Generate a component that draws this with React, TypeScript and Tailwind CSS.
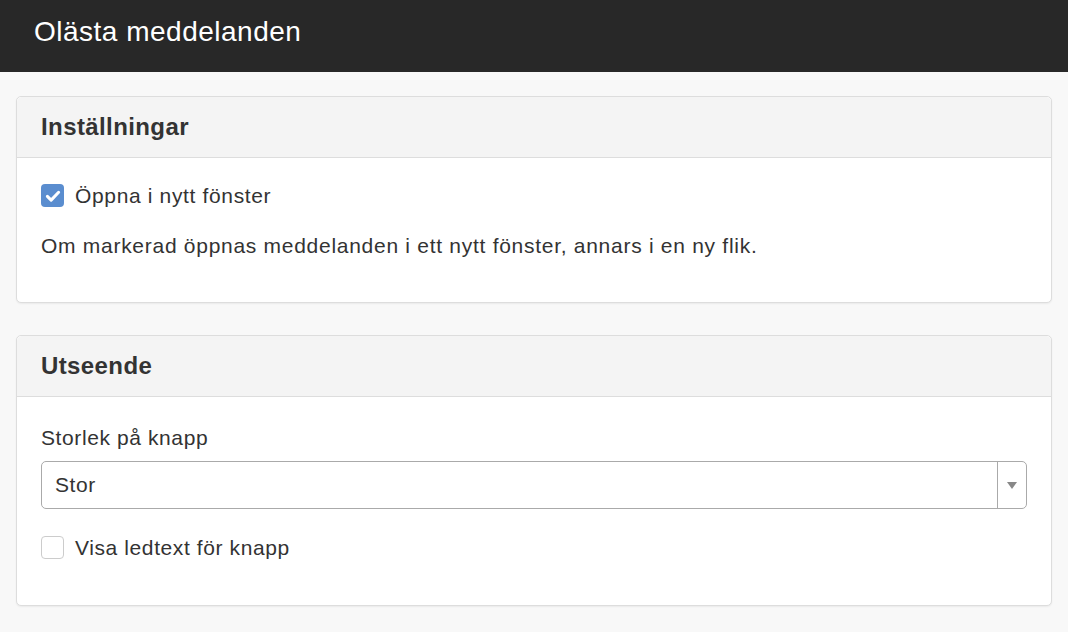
function Card({ title, children, bodyClass }: { title: string; children: React.ReactNode; bodyClass: string }) {
  return (
    <div className="bg-white border border-[#dddddd] rounded-[5px] shadow-[0_1px_2px_rgba(0,0,0,0.06)]">
      <div className="bg-[#f4f4f4] border-b border-[#dddddd] rounded-t-[5px] h-[61px] flex items-center px-6">
        <h2 className="text-[24px] tracking-[0.4px] font-bold text-[#333333]">{title}</h2>
      </div>
      <div className={bodyClass}>{children}</div>
    </div>
  );
}

function CheckMark() {
  return (
    <svg width="18" height="18" viewBox="0 0 24 24" fill="none">
      <path d="M4.5 12.5l5 5L19.5 7" stroke="white" strokeWidth="4" strokeLinecap="round" strokeLinejoin="round" />
    </svg>
  );
}

export default function App() {
  return (
    <div
      className="min-h-screen bg-[#f8f8f8] text-[#333333]"
      style={{ fontFamily: '"Liberation Sans", Arial, sans-serif' }}
    >
      <header className="bg-[#282828] h-[72px] flex items-center px-[34px]">
        <h1 className="text-white text-[28px] tracking-[0.5px] leading-none -mt-[8px]">Olästa meddelanden</h1>
      </header>

      <main className="px-4 pt-6 flex flex-col gap-8">
        <Card title="Inställningar" bodyClass="px-6 pt-[26px] pb-[41px]">
          <label className="flex items-center gap-[11px] h-[23px] text-[21px] tracking-[0.65px]">
            <span className="w-[23px] h-[23px] rounded-[4px] bg-[#5a8dcf] flex items-center justify-center">
              <CheckMark />
            </span>
            Öppna i nytt fönster
          </label>
          <p className="mt-[24px] text-[21px] leading-[30px] tracking-[0.72px]">
            Om markerad öppnas meddelanden i ett nytt fönster, annars i en ny flik.
          </p>
        </Card>

        <Card title="Utseende" bodyClass="px-6 pt-[26px] pb-[46px]">
          <div className="text-[21px] leading-[30px] tracking-[0.6px]">Storlek på knapp</div>
          <div className="mt-[8px] h-[48px] border border-[#aaaaaa] rounded-[5px] flex items-center">
            <span className="flex-1 pl-[13px] text-[21px] tracking-[0.6px]">Stor</span>
            <span className="w-[29px] h-full border-l border-[#aaaaaa] flex items-center justify-center">
              <span className="w-0 h-0 border-l-[5px] border-r-[5px] border-t-[7px] border-l-transparent border-r-transparent border-t-[#888888]" />
            </span>
          </div>
          <label className="mt-[27px] flex items-center gap-[11px] h-[23px] text-[21px] tracking-[0.6px]">
            <span className="w-[23px] h-[23px] rounded-[4px] border border-[#cccccc] bg-white" />
            Visa ledtext för knapp
          </label>
        </Card>
      </main>
    </div>
  );
}
